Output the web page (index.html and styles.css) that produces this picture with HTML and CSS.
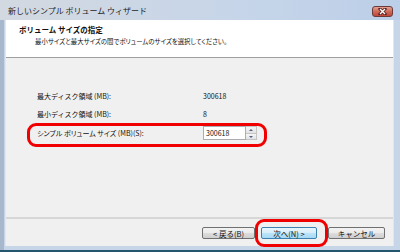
FILE: index.html
```html
<!DOCTYPE html>
<html lang="ja">
<head>
  <meta charset="UTF-8" />
  <title>新しいシンプル ボリューム ウィザード</title>
  <link rel="stylesheet" href="styles.css">
</head>
<body>

  <div class="window">
    <div class="titlebar">
      <span class="title">新しいシンプル ボリューム ウィザード</span>
      <span class="close">
        <svg width="11" height="7" viewBox="0 0 11 7">
          <path d="M3 1 L8 6 M8 1 L3 6" stroke="#5a2020" stroke-width="3" stroke-linecap="square"/>
          <path d="M3 1 L8 6 M8 1 L3 6" stroke="#ffffff" stroke-width="1.4"/>
        </svg>
      </span>
    </div>

    <div class="client">
      <!-- ヘッダー -->
      <div class="head">
        <div class="head-title">ボリューム サイズの指定</div>
        <div class="head-sub">最小サイズと最大サイズの間でボリュームのサイズを選択してください。</div>
      </div>

      <!-- サイズ -->
      <div class="content">
        <div class="row"><span class="label">最大ディスク領域 (MB):</span><span class="value">300618</span></div>
        <div class="row"><span class="label">最小ディスク領域 (MB):</span><span class="value">8</span></div>
        <div class="row row-input">
          <label class="label label-palt" for="size">シンプル ボリューム サイズ (MB)(S):</label>
          <div class="spin">
            <input id="size" type="text" value="300618">
            <div class="spin-btns">
              <span class="spin-up"></span>
              <span class="spin-down"></span>
            </div>
          </div>
        </div>
      </div>

      <!-- ボタン -->
      <div class="footer">
        <button class="btn">&lt; 戻る(B)</button>
        <button class="btn btn-next">次へ(N) &gt;</button>
        <button class="btn btn-cancel">キャンセル</button>
      </div>
    </div>

    <span class="mark mark-size"></span>
    <span class="mark mark-next"></span>
  </div>

</body>
</html>
```

FILE: styles.css
```css
body { margin: 0; font-family: "Noto Sans CJK JP", "Noto Sans", sans-serif; color: #111; }
.window { position: relative; width: 400px; height: 252px; box-sizing: border-box; display: flex; flex-direction: column; padding: 0 6px 6px 5px; background: linear-gradient(to right, #a7b7cc 0, #a7b7cc 4px, #c6d5e8 4px); box-shadow: inset 0 -2px #24566f; }
.titlebar { height: 20px; margin: 0 -6px 0 -5px; padding: 0 7px 0 8px; display: flex; align-items: center; justify-content: space-between; background: linear-gradient(to right, #d3d9e1, #c6d5e9 60%, #bccfe8); }
.title { font-size: 8px; color: #1e1e1e; }
.close { width: 21px; height: 11px; margin-top: 2px; display: flex; align-items: center; justify-content: center; border: 1px solid #6b3a3a; border-radius: 3px; box-sizing: border-box; background: linear-gradient(#e3a291, #cf6a58 50%, #c0453a); }
.client { flex: 1; display: flex; flex-direction: column; background: #f0f0f0; border-left: 1px solid #dde8f5; border-right: 1px solid #dde8f5; }
.head { height: 38px; box-sizing: border-box; background: #fff; border-bottom: 1px solid #a0a0a0; padding: 5px 0 0 13px; }
.head-title { font-size: 7.5px; font-weight: bold; line-height: 10px; }
.head-sub { font-size: 6.4px; line-height: 10px; padding: 2px 0 0 16px; font-feature-settings: "palt"; }
.content { flex: 1; padding: 29px 0 0 31px; font-size: 7px; }
.row { height: 18px; display: flex; align-items: center; }
.row-input { margin-top: 1px; }
.label { width: 166px; }
.label-palt { font-feature-settings: "palt"; }
.spin { display: flex; height: 14px; }
.spin input { width: 43px; height: 14px; box-sizing: border-box; border: 1px solid #abadb3; padding: 0 2px; font: 7px "Noto Sans CJK JP", sans-serif; color: #111; outline: none; }
.spin-btns { width: 11px; display: flex; flex-direction: column; border: 1px solid #c5c5c5; border-left: none; box-sizing: border-box; }
.spin-up, .spin-down { flex: 1; position: relative; background: linear-gradient(#f6f6f6, #e2e2e2); }
.spin-up { border-bottom: 1px solid #c5c5c5; }
.spin-up::after, .spin-down::after { content: ""; position: absolute; left: 3px; top: 2px; border: 2px solid transparent; }
.spin-up::after { border-bottom-color: #4d6185; top: 0; }
.spin-down::after { border-top-color: #4d6185; top: 2px; }
.footer { height: 29px; box-sizing: border-box; border-top: 2px solid #d7d7d7; padding: 8px 8px 0 0; display: flex; justify-content: flex-end; align-items: flex-start; }
.btn { height: 12px; width: 53px; padding: 0; font: 7.5px "Noto Sans CJK JP", sans-serif; color: #111; border: 1px solid #707070; border-radius: 2px; background: linear-gradient(#f2f2f2 0, #ebebeb 50%, #dddddd 50%, #cfcfcf); }
.btn-next { width: 56px; margin-left: 6px; border-color: #3c7fb1; background: linear-gradient(#e8f5fc 0, #d6eefa 50%, #bde4f8 50%, #a7d9f5); }
.btn-cancel { width: 57px; margin-left: 11px; }
.mark { position: absolute; border: 3px solid #f00000; border-radius: 9px; box-sizing: border-box; }
.mark-size { left: 27px; top: 123px; width: 240px; height: 24px; }
.mark-next { left: 255px; top: 219px; width: 73px; height: 28px; }
```
